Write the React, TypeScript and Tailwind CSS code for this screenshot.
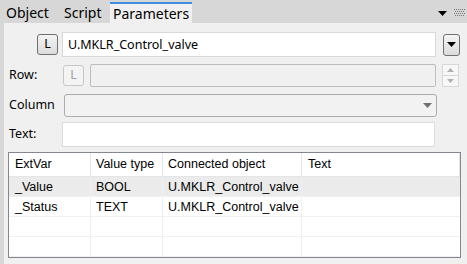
const rows = [
  { ext: '_Value', type: 'BOOL', obj: 'U.MKLR_Control_valve', text: '' },
  { ext: '_Status', type: 'TEXT', obj: 'U.MKLR_Control_valve', text: '' },
  { ext: '', type: '', obj: '', text: '' },
  { ext: '', type: '', obj: '', text: '' },
];

function Tri({ className }: { className?: string }) {
  return (
    <svg width="9" height="5" viewBox="0 0 9 5" className={className}>
      <path d="M0 0h9L4.5 5z" fill="currentColor" />
    </svg>
  );
}

export default function App() {
  return (
    <div
      className="w-[467px] h-[264px] bg-[#d7d7d7] flex flex-col overflow-hidden text-[#000]"
      style={{ fontFamily: '"Noto Sans", "Open Sans", sans-serif' }}
    >
      {/* tabs */}
      <div className="h-[23px] flex items-end relative">
        <div className="w-[58px] h-[20px] pl-[6px] text-[14px] leading-[20px]">Object</div>
        <div className="w-[52px] h-[20px] pl-[6px] text-[14px] leading-[20px]">Script</div>
        <div className="w-[82px] h-[21px] pl-[3px] text-[14px] leading-[19px] bg-[#f0f0f0] border-t-2 border-[#3d8ee0]">
          Parameters
        </div>
        <div className="absolute right-[2px] top-[9px] flex items-center gap-[7px]">
          <Tri className="text-black" />
          <svg width="11" height="8" viewBox="0 0 11 8">
            {[0, 2, 4, 6].map((y) =>
              [0, 2, 4, 6, 8, 10].map((x) => (
                <rect key={`${x}-${y}`} x={x + ((y / 2) % 2)} y={y} width="1" height="1" fill="#777" />
              ))
            )}
          </svg>
        </div>
      </div>

      {/* content */}
      <div className="flex-1 ml-[4px] bg-[#f0f0f0] text-[12.5px]">
        {/* object row */}
        <div className="flex items-center mt-[9px] h-[25px]">
          <div className="w-[33px]" />
          <button className="w-[21px] h-[21px] rounded-[3px] border border-[#707070] bg-gradient-to-b from-[#f4f4f4] to-[#dcdcdc] text-[12.5px] leading-none flex items-center justify-center">
            L
          </button>
          <div className="ml-[4px] w-[374px] h-[25px] bg-white border border-[#d9d9d9] px-[5px] leading-[23px] text-[12.5px]">
            U.MKLR_Control_valve
          </div>
          <button className="ml-[7px] w-[17px] h-[22px] rounded-[3px] border border-[#707070] bg-gradient-to-b from-[#f4f4f4] to-[#dcdcdc] flex items-center justify-center">
            <Tri className="text-black" />
          </button>
        </div>

        {/* row row */}
        <div className="flex items-center mt-[7px] h-[23px]">
          <div className="w-[59px] pl-[5px]">Row:</div>
          <div className="w-[21px] h-[21px] rounded-[3px] border border-[#c6c6c6] bg-[#f4f4f4] text-[#a0a0a0] leading-none flex items-center justify-center">
            L
          </div>
          <div className="ml-[6px] w-[346px] h-[23px] rounded-[2px] bg-[#f0f0f0] border border-[#bdbdbd]" />
          <div className="ml-[6px] w-[17px] h-[23px] flex flex-col border border-[#d8d8d8]">
            <div className="flex-1 flex items-center justify-center bg-[#f7f7f7] border-b border-[#d8d8d8]">
              <svg width="7" height="4" viewBox="0 0 7 4"><path d="M0 4h7L3.5 0z" fill="#b0b0b0" /></svg>
            </div>
            <div className="flex-1 flex items-center justify-center bg-[#f7f7f7]">
              <svg width="7" height="4" viewBox="0 0 7 4"><path d="M0 0h7L3.5 4z" fill="#b0b0b0" /></svg>
            </div>
          </div>
        </div>

        {/* column row */}
        <div className="flex items-center mt-[7px] h-[23px]">
          <div className="w-[60px] pl-[5px]">Column</div>
          <div className="w-[373px] h-[23px] rounded-[3px] border border-[#adadad] bg-[#f2f2f2] flex items-center justify-end pr-[4px]">
            <Tri className="text-[#707070]" />
          </div>
        </div>

        {/* text row */}
        <div className="flex items-center mt-[5px] h-[25px]">
          <div className="w-[58px] pl-[5px]">Text:</div>
          <div className="w-[373px] h-[25px] bg-white border border-[#dcdcdc]" />
        </div>

        {/* table */}
        <div
          className="mt-[5px] ml-[4px] w-[453px] h-[106px] border border-[#828790] bg-white text-[12.5px] whitespace-nowrap"
          style={{ fontFamily: '"Liberation Sans", Arial, sans-serif' }}
        >
          <div className="flex h-[24px] border-b border-[#e5e5e5] items-center">
            <div className="w-[82px] pl-[6px] border-r border-[#e5e5e5] h-full flex items-center">ExtVar</div>
            <div className="w-[72px] pl-[5px] border-r border-[#e5e5e5] h-full flex items-center">Value type</div>
            <div className="w-[139px] pl-[5px] border-r border-[#e5e5e5] h-full flex items-center">Connected object</div>
            <div className="w-[158px] pl-[6px] border-r border-[#e5e5e5] h-full flex items-center">Text</div>
          </div>
          {rows.map((r, i) => (
            <div
              key={i}
              className={`flex h-[20px] items-center border-b border-[#f0f0f0] ${i === 0 ? 'bg-[#ebebeb]' : ''}`}
            >
              <div className="w-[82px] pl-[6px] border-r border-[#f0f0f0] h-full leading-[20px]">{r.ext}</div>
              <div className="w-[72px] pl-[5px] border-r border-[#f0f0f0] h-full leading-[20px]">{r.type}</div>
              <div className="w-[139px] pl-[5px] border-r border-[#f0f0f0] h-full leading-[20px]">{r.obj}</div>
              <div className="w-[158px] pl-[6px] h-full leading-[20px]">{r.text}</div>
            </div>
          ))}
        </div>
      </div>
    </div>
  );
}
